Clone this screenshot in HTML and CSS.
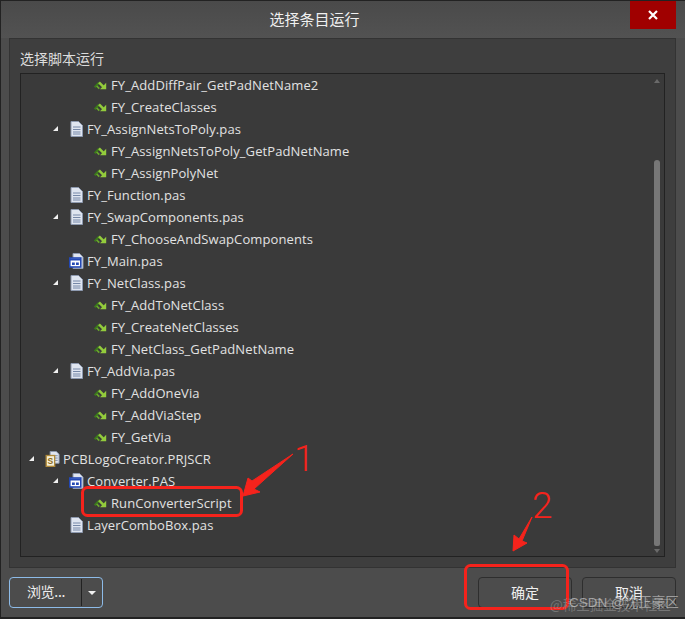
FILE: index.html
```html
<!DOCTYPE html>
<html lang="zh">
<head>
<meta charset="utf-8">
<title>选择条目运行</title>
<link rel="stylesheet" href="styles.css">
</head>
<body>
<svg class="defs" width="0" height="0" aria-hidden="true">
  <symbol id="proc" viewBox="0 0 15 16">
    <path d="M1.700 10.300 6 5.800" stroke="#3c7a1c" stroke-width="2.200" fill="none"/>
    <path d="M3.700 9 6.300 11.600" stroke="#6aa82c" stroke-width="1.700" fill="none"/>
    <path d="M6 5.300 10.500 9.800" stroke="#93cc3c" stroke-width="2.400" fill="none"/>
    <path d="M13.200 5.800V12.200H7Z" fill="#93cc3c"/>
  </symbol>
  <symbol id="doc" viewBox="0 0 15 16">
    <path d="M2 .5H9.500L13.500 4.500V15.500H2Z" fill="#dfe5f0" stroke="#8e9ab0"/>
    <path d="M4 6H11.500M4 8.500H11.500M4 11H11.500M4 13H11.500" stroke="#7688a8"/>
  </symbol>
  <symbol id="form" viewBox="0 0 15 16">
    <path d="M4 .5H10.500L14 4V15.500H4Z" fill="#dfe5f0" stroke="#8e9ab0"/>
    <rect x=".8" y="5" width="11" height="9" fill="#fff" stroke="#2348b4" stroke-width="1.600"/>
    <path d="M1 6.500H12" stroke="#2348b4" stroke-width="2"/>
    <path d="M3 9.500H5.800V12H3ZM7 9.500H9.800V12H7Z" fill="#2348b4"/>
  </symbol>
</svg>
<div class="window">
  <header class="titlebar">
    <h1 class="title">选择条目运行</h1>
    <button class="close" aria-label="关闭">
      <svg width="10" height="10" viewBox="0 0 10 10"><path d="M1 1 9 9M9 1 1 9" stroke="#fff" stroke-width="2.200"/></svg>
    </button>
  </header>
  <section class="panel">
    <div class="label">选择脚本运行</div>
    <div class="tree">
      <div class="rows">
        <div class="row l2"><span class="caret"></span><svg class="ic"><use href="#proc"/></svg><span>FY_AddDiffPair_GetPadNetName2</span></div>
        <div class="row l2"><span class="caret"></span><svg class="ic"><use href="#proc"/></svg><span>FY_CreateClasses</span></div>
        <div class="row l1"><span class="caret open"></span><svg class="ic"><use href="#doc"/></svg><span>FY_AssignNetsToPoly.pas</span></div>
        <div class="row l2"><span class="caret"></span><svg class="ic"><use href="#proc"/></svg><span>FY_AssignNetsToPoly_GetPadNetName</span></div>
        <div class="row l2"><span class="caret"></span><svg class="ic"><use href="#proc"/></svg><span>FY_AssignPolyNet</span></div>
        <div class="row l1"><span class="caret"></span><svg class="ic"><use href="#doc"/></svg><span>FY_Function.pas</span></div>
        <div class="row l1"><span class="caret open"></span><svg class="ic"><use href="#doc"/></svg><span>FY_SwapComponents.pas</span></div>
        <div class="row l2"><span class="caret"></span><svg class="ic"><use href="#proc"/></svg><span>FY_ChooseAndSwapComponents</span></div>
        <div class="row l1"><span class="caret"></span><svg class="ic"><use href="#form"/></svg><span>FY_Main.pas</span></div>
        <div class="row l1"><span class="caret open"></span><svg class="ic"><use href="#doc"/></svg><span>FY_NetClass.pas</span></div>
        <div class="row l2"><span class="caret"></span><svg class="ic"><use href="#proc"/></svg><span>FY_AddToNetClass</span></div>
        <div class="row l2"><span class="caret"></span><svg class="ic"><use href="#proc"/></svg><span>FY_CreateNetClasses</span></div>
        <div class="row l2"><span class="caret"></span><svg class="ic"><use href="#proc"/></svg><span>FY_NetClass_GetPadNetName</span></div>
        <div class="row l1"><span class="caret open"></span><svg class="ic"><use href="#doc"/></svg><span>FY_AddVia.pas</span></div>
        <div class="row l2"><span class="caret"></span><svg class="ic"><use href="#proc"/></svg><span>FY_AddOneVia</span></div>
        <div class="row l2"><span class="caret"></span><svg class="ic"><use href="#proc"/></svg><span>FY_AddViaStep</span></div>
        <div class="row l2"><span class="caret"></span><svg class="ic"><use href="#proc"/></svg><span>FY_GetVia</span></div>
        <div class="row l0"><span class="caret open"></span><svg class="ic" viewBox="0 0 15 17">
          <path d="M5 .5H11.500L14.500 3.500V13H5Z" fill="#dfe5f0" stroke="#8e9ab0"/>
          <path d="M10 5H13M10 7.500H13M10 10H13" stroke="#7688a8"/>
          <rect x=".8" y="4.800" width="9" height="11.500" fill="#f5efd8" stroke="#b08a3a" stroke-width="1.400"/>
          <text x="5.300" y="14" text-anchor="middle" class="proj-s">S</text>
        </svg><span>PCBLogoCreator.PRJSCR</span></div>
        <div class="row l1"><span class="caret open"></span><svg class="ic"><use href="#form"/></svg><span>Converter.PAS</span></div>
        <div class="row l2"><span class="caret"></span><svg class="ic"><use href="#proc"/></svg><span>RunConverterScript</span></div>
        <div class="row l1"><span class="caret"></span><svg class="ic"><use href="#doc"/></svg><span>LayerComboBox.pas</span></div>
      </div>
      <div class="scrollbar">
        <span class="arrow up"></span>
        <div class="track"><div class="thumb"></div></div>
        <span class="arrow down"></span>
      </div>
    </div>
  </section>
  <footer class="footer">
    <div class="split">
      <span class="split-main">浏览...</span>
      <span class="split-drop"><i class="drop-arrow"></i></span>
    </div>
    <div class="actions">
      <button class="btn">确定</button>
      <button class="btn">取消</button>
    </div>
  </footer>
  <svg class="marks" width="685" height="619" viewBox="0 0 685 619" aria-hidden="true">
    <rect x="82.500" y="487.500" width="159" height="28" rx="5" fill="none" stroke="#f5231c" stroke-width="3"/>
    <path d="M293 454 252 481 248 478 243 496 260 492 254 489Z" fill="#f5231c" stroke="#f5231c" stroke-linejoin="round"/>
    <rect x="465.500" y="565.500" width="102" height="43" rx="5" fill="none" stroke="#f5231c" stroke-width="3"/>
    <path d="M532 517 519 539 514 535 513 551 527 543 522 541Z" fill="#f5231c" stroke="#f5231c" stroke-linejoin="round"/>
  </svg>
  <span class="num n1">1</span>
  <span class="num n2">2</span>
  <span class="wm wm-a">@稀土掘金技术社区</span>
  <span class="wm wm-b">CSDN @沈正豪区</span>
</div>
</body>
</html>
```
FILE: styles.css
```css
* { box-sizing: border-box; }
html, body { margin: 0; padding: 0; background: #4d4d4d; }
.defs { position: absolute; }
.window {
  position: relative;
  width: 685px;
  height: 619px;
  overflow: hidden;
  display: flex;
  flex-direction: column;
  border: 1px solid #222;
  border-width: 1px 0 2px 1px;
  background: #4c4c4c;
  font-family: "Open Sans", "Noto Sans CJK SC", sans-serif;
  color: #e6e6e6;
}
.titlebar {
  height: 37px;
  flex: none;
  display: flex;
  align-items: flex-start;
  justify-content: center;
  position: relative;
  background: linear-gradient(#4a4a4a, #525252);
  padding-right: 57px;
}
.title {
  margin: 8px 0 0;
  font: 400 15px/20px "Noto Sans CJK SC", sans-serif;
  color: #f0f0f0;
}
.close {
  position: absolute;
  top: 0;
  right: 9px;
  width: 46px;
  height: 28px;
  border: 0;
  padding: 0;
  background: #a00000;
  display: flex;
  align-items: center;
  justify-content: center;
}
.panel {
  margin: 0 9px 0 8px;
  height: 530px;
  flex: none;
  border: 1px solid #333;
  background: #3e3e3e;
  padding: 9px 10px 10px;
  display: flex;
  flex-direction: column;
}
.label {
  height: 25px;
  font: 400 14px/20px "Noto Sans CJK SC", sans-serif;
  color: #dcdcdc;
}
.tree {
  flex: 1;
  border: 1px solid #222;
  background: #3a3a3a;
  display: flex;
  overflow: hidden;
}
.rows { flex: 1; }
.row {
  height: 22px;
  display: flex;
  align-items: center;
  font-size: 13px;
  letter-spacing: .1px;
  line-height: 22px;
  white-space: nowrap;
  color: #e2e2e2;
}
.l0 { padding-left: 7px; }
.l1 { padding-left: 31px; }
.l2 { padding-left: 55px; }
.caret { width: 17px; height: 8px; flex: none; position: relative; }
.caret.open::before {
  content: "";
  position: absolute;
  left: 1px;
  top: 1px;
  width: 0;
  height: 0;
  border-style: solid;
  border-width: 0 0 5px 5px;
  border-color: transparent transparent #f0f0f0 transparent;
}
.ic { width: 15px; height: 16px; margin-right: 3px; flex: none; }
.proj-s { font: 700 9px "Liberation Sans", sans-serif; fill: #8a6a20; }
.scrollbar {
  width: 12px;
  margin-right: 1px;
  flex: none;
  display: flex;
  flex-direction: column;
  align-items: center;
  padding: 5px 0 3px;
}
.arrow { width: 0; height: 0; border-style: solid; flex: none; }
.arrow.up { border-width: 0 3.500px 4px; border-color: transparent transparent #6a6a6a; }
.arrow.down { border-width: 4px 3.500px 0; border-color: #6a6a6a transparent transparent; }
.track { flex: 1; width: 6px; padding: 77px 0 3px; }
.thumb { height: 100%; background: #777; border-radius: 3px 3px 2px 2px; }
.footer {
  flex: 1;
  display: flex;
  justify-content: space-between;
  padding: 9px 9px 8px 8px;
}
.split {
  width: 94px;
  height: 31px;
  border: 1px solid #8dbbe8;
  border-radius: 4px;
  display: flex;
  align-items: center;
  font: 400 14px/20px "Noto Sans CJK SC", sans-serif;
  color: #eee;
}
.split-main {
  width: 72px;
  height: 27px;
  line-height: 25px;
  text-align: center;
  border-right: 1px solid #222;
  padding-left: 1px;
  letter-spacing: -.3px;
}
.split-drop { flex: 1; display: flex; justify-content: center; }
.drop-arrow {
  width: 0;
  height: 0;
  border-style: solid;
  border-width: 4px 4px 0;
  border-color: #f0f0f0 transparent transparent;
}
.actions { display: flex; gap: 10px; }
.btn {
  width: 94px;
  height: 31px;
  border: 1px solid #2e2e2e;
  border-radius: 4px;
  background: #4c4c4c;
  color: #f0f0f0;
  font: 400 14px/20px "Noto Sans CJK SC", sans-serif;
  padding: 0 0 2px;
}
.marks { position: absolute; left: -1px; top: -1px; pointer-events: none; }
.num {
  position: absolute;
  color: #f5231c;
  font-family: "Roboto", sans-serif;
  font-weight: 300;
  font-size: 37px;
  line-height: 36px;
}
.n1 { left: 293px; top: 440px; }
.n2 { left: 531px; top: 487px; }
.wm {
  position: absolute;
  font-size: 13.500px;
  line-height: 18px;
  white-space: nowrap;
}
.wm-a { left: 549px; top: 594px; color: rgba(160,160,160,.5); font-family: "Noto Sans CJK SC", sans-serif; }
.wm-b { left: 568px; top: 593px; color: rgba(215,215,215,.62); font-family: "Liberation Sans", "Noto Sans CJK SC", sans-serif; }
```
